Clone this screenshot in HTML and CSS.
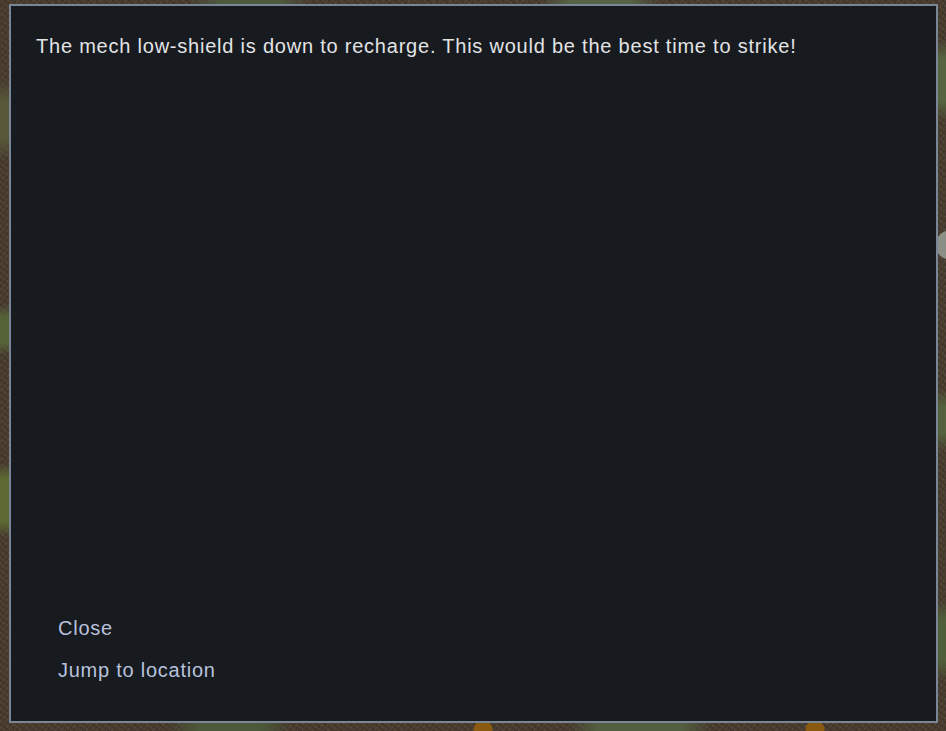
FILE: index.html
```html
<!DOCTYPE html>
<html lang="en">
<head>
<meta charset="utf-8">
<title>Notification</title>
<link rel="stylesheet" href="styles.css">
</head>
<body>
<div class="map">
  <div class="dialog">
    <p class="message">The mech low-shield is down to recharge. This would be the best time to strike!</p>
    <div class="actions">
      <div class="action">Close</div>
      <div class="action">Jump to location</div>
    </div>
  </div>
</div>
</body>
</html>
```
FILE: styles.css
```css
html, body {
  margin: 0;
  padding: 0;
}

body {
  width: 946px;
  height: 731px;
  overflow: hidden;
  font-family: "Liberation Sans", Arial, sans-serif;
}

.map {
  width: 946px;
  height: 731px;
  padding: 4px 0 0 9px;
  box-sizing: border-box;
  background-color: #4a3d30;
  background-image:
    radial-gradient(circle at 483px 730px, #8a5a10 0 9px, transparent 10px),
    radial-gradient(circle at 815px 730px, #8a5a10 0 9px, transparent 10px),
    radial-gradient(circle at 950px 245px, #8b8f86 0 14px, transparent 15px),
    radial-gradient(ellipse at 4px 330px, #556238 0 30px, transparent 60px),
    radial-gradient(ellipse at 4px 500px, #5d6a32 0 40px, transparent 70px),
    radial-gradient(ellipse at 4px 120px, #5a5a3a 0 25px, transparent 60px),
    radial-gradient(ellipse at 942px 80px, #566540 0 30px, transparent 60px),
    radial-gradient(ellipse at 942px 420px, #55603c 0 30px, transparent 70px),
    radial-gradient(ellipse at 942px 640px, #4f5f3a 0 30px, transparent 60px),
    radial-gradient(ellipse at 640px 728px, #536040 0 40px, transparent 70px),
    radial-gradient(ellipse at 230px 728px, #4c5a3a 0 30px, transparent 60px),
    radial-gradient(ellipse at 600px 2px, #566345 0 30px, transparent 60px),
    radial-gradient(ellipse at 250px 2px, #4d5a3e 0 30px, transparent 60px),
    repeating-linear-gradient(37deg, rgba(0,0,0,0.12) 0 2px, transparent 2px 5px),
    repeating-linear-gradient(-51deg, rgba(255,255,255,0.05) 0 1px, transparent 1px 4px);
}

.dialog {
  width: 929px;
  height: 719px;
  box-sizing: border-box;
  border: 2px solid #7a8696;
  background: #171a1f;
  display: flex;
  flex-direction: column;
  padding: 28px 25px 30px 25px;
}

.message {
  margin: 0;
  flex: 1;
  font-size: 20px;
  line-height: 24px;
  letter-spacing: 0.78px;
  color: #e2e3e5;
}

.actions {
  display: flex;
  flex-direction: column;
  padding-left: 22px;
}

.action {
  height: 42px;
  line-height: 42px;
  font-size: 20px;
  letter-spacing: 0.75px;
  color: #b9c2dc;
  cursor: pointer;
}
```
